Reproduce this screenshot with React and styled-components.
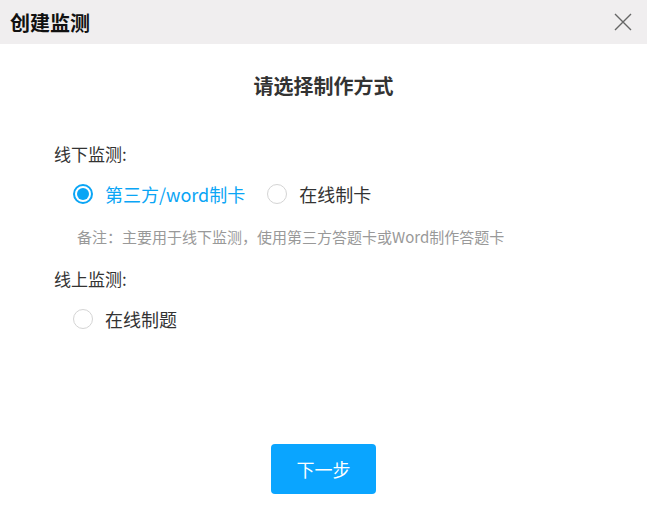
import React, { useState } from "react";
import styled, { createGlobalStyle } from "styled-components";

const GlobalStyle = createGlobalStyle`
    html, body {
        margin: 0;
        padding: 0;
        background: #fff;
        font-family: "Noto Sans CJK SC", "Noto Sans", sans-serif;
    }
`;

const Dialog = styled.div`
    width: 647px;
    height: 521px;
    display: flex;
    flex-direction: column;
    background: #fff;
`;

const Header = styled.div`
    height: 44px;
    flex-shrink: 0;
    display: flex;
    align-items: center;
    justify-content: space-between;
    padding: 0 14px 0 10px;
    background: #f0eeef;
`;

const Title = styled.h2`
    margin: 0;
    font-size: 20px;
    font-weight: 700;
    color: #111;
`;

const Close = styled.button`
    border: 0;
    background: none;
    padding: 0;
    width: 20px;
    height: 20px;
    display: flex;
    align-items: center;
    justify-content: center;
    cursor: pointer;
`;

const Body = styled.div`
    flex-grow: 1;
    display: flex;
    flex-direction: column;
    padding: 0 54px;
`;

const Heading = styled.h3`
    margin: 28px 0 42px;
    text-align: center;
    font-size: 20px;
    line-height: 28px;
    font-weight: 700;
    color: #333;
`;

const Section = styled.div`
    display: flex;
    flex-direction: column;
    margin-bottom: 19px;
`;

const SectionTitle = styled.div`
    font-size: 17px;
    line-height: 24px;
    color: #333;
`;

const Options = styled.div`
    display: flex;
    align-items: center;
    gap: 22px;
    padding-left: 19px;
    margin-top: 16px;
`;

const Option = styled.label`
    display: flex;
    align-items: center;
    gap: 12px;
    font-size: 18px;
    line-height: 24px;
    color: ${p => (p.$checked ? "#0aa5f5" : "#333")};
    cursor: pointer;
`;

const Dot = styled.span`
    box-sizing: border-box;
    width: 20px;
    height: 20px;
    border-radius: 50%;
    border: ${p => (p.$checked ? "2px solid #0aa5f5" : "1px solid #d4d4d4")};
    background: #fff;
    display: flex;
    align-items: center;
    justify-content: center;
    &::after {
        content: "";
        width: 12px;
        height: 12px;
        border-radius: 50%;
        background: ${p => (p.$checked ? "#0aa5f5" : "transparent")};
    }
`;

const Note = styled.p`
    margin: 20px 0 0 23px;
    font-size: 15px;
    line-height: 22px;
    color: #999;
`;

const Footer = styled.div`
    margin-top: auto;
    display: flex;
    justify-content: center;
    padding-bottom: 27px;
`;

const NextButton = styled.button`
    width: 105px;
    height: 50px;
    border: 0;
    border-radius: 4px;
    background: #0aa5ff;
    color: #fff;
    font-family: inherit;
    font-size: 18px;
    cursor: pointer;
`;

const Radio = ({ checked, label, onClick }) => (
    <Option $checked={checked} onClick={onClick}>
        <Dot $checked={checked} />
        {label}
    </Option>
);

export default function App() {
    const [mode, setMode] = useState("third");

    return (
        <Dialog>
            <GlobalStyle />
            <Header>
                <Title>创建监测</Title>
                <Close aria-label="close">
                    <svg width="18" height="18" viewBox="0 0 18 18">
                        <path d="M1 1L17 17M17 1L1 17" stroke="#666" strokeWidth="1.4" fill="none" />
                    </svg>
                </Close>
            </Header>
            <Body>
                <Heading>请选择制作方式</Heading>
                <Section>
                    <SectionTitle>线下监测:</SectionTitle>
                    <Options>
                        <Radio checked={mode === "third"} label="第三方/word制卡" onClick={() => setMode("third")} />
                        <Radio checked={mode === "card"} label="在线制卡" onClick={() => setMode("card")} />
                    </Options>
                    <Note>备注：主要用于线下监测，使用第三方答题卡或Word制作答题卡</Note>
                </Section>
                <Section>
                    <SectionTitle>线上监测:</SectionTitle>
                    <Options>
                        <Radio checked={mode === "online"} label="在线制题" onClick={() => setMode("online")} />
                    </Options>
                </Section>
                <Footer>
                    <NextButton>下一步</NextButton>
                </Footer>
            </Body>
        </Dialog>
    );
}
